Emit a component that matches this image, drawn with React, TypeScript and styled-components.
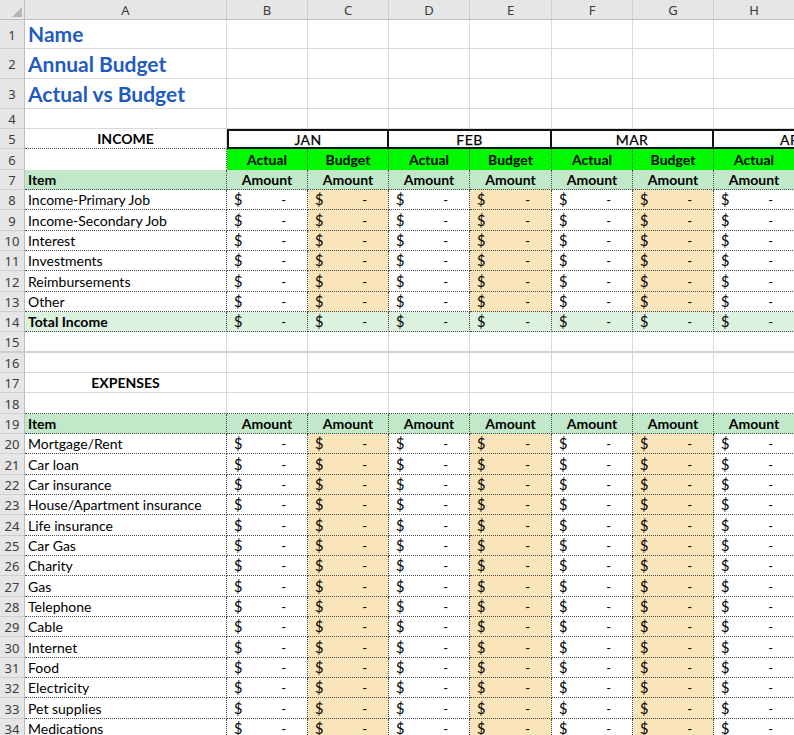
import React from 'react';
import styled, { createGlobalStyle } from 'styled-components';

const GlobalStyle = createGlobalStyle`
  html, body { margin: 0; padding: 0; background: #fff; }
  body { overflow: hidden; }
`;

const CELL_FONT = `"Lato", "Open Sans", "Noto Sans", sans-serif`;
const HEAD_FONT = `"Noto Sans", "Open Sans", sans-serif`;

type Line = 'grid' | 'dot' | 'none' | 'thick';

const line = (t: Line) => {
  switch (t) {
    case 'dot':
      return '1px dotted #4a4a4a';
    case 'none':
      return '1px solid transparent';
    case 'thick':
      return '2px solid #d2d2d2';
    default:
      return '1px solid #d9d9d9';
  }
};

const Sheet = styled.div`
  width: 794px;
  height: 735px;
  overflow: hidden;
  background: #fff;
  font-family: ${CELL_FONT};
  color: #000;
`;

const Row = styled.div<{ $h: number }>`
  display: flex;
  height: ${(p) => p.$h}px;
  width: max-content;
`;

const Corner = styled.div`
  width: 25px;
  height: 100%;
  box-sizing: border-box;
  background: #e6e6e6;
  border-right: 1px solid #bdbdbd;
  border-bottom: 1px solid #bdbdbd;
  display: flex;
  align-items: flex-end;
  justify-content: flex-end;
  padding: 0 2px 2px 0;
  flex: none;
`;

const ColHead = styled.div<{ $w: number }>`
  width: ${(p) => p.$w}px;
  height: 100%;
  box-sizing: border-box;
  flex: none;
  background: #e6e6e6;
  border-right: 1px solid #cfcfcf;
  border-bottom: 1px solid #bdbdbd;
  display: flex;
  align-items: center;
  justify-content: center;
  font-family: ${HEAD_FONT};
  font-size: 13px;
  color: #3c3c3c;
`;

const RowNum = styled.div<{ $bb?: Line }>`
  width: 25px;
  height: 100%;
  box-sizing: border-box;
  flex: none;
  background: #e6e6e6;
  border-right: 1px solid #bdbdbd;
  border-bottom: ${(p) => (p.$bb === 'thick' ? '2px solid #cfcfcf' : '1px solid #cfcfcf')};
  display: flex;
  align-items: center;
  justify-content: center;
  padding-top: 1px;
  font-family: ${HEAD_FONT};
  font-size: 13px;
  color: #3c3c3c;
`;

const Cell = styled.div<{
  $w: number;
  $bg?: string;
  $rb?: Line;
  $bb?: Line;
  $align?: 'left' | 'center';
  $bold?: boolean;
}>`
  width: ${(p) => p.$w}px;
  height: 100%;
  box-sizing: border-box;
  flex: none;
  background: ${(p) => p.$bg || '#fff'};
  border-right: ${(p) => line(p.$rb || 'grid')};
  border-bottom: ${(p) => line(p.$bb || 'grid')};
  display: flex;
  align-items: flex-end;
  justify-content: ${(p) => (p.$align === 'center' ? 'center' : 'flex-start')};
  padding: 0 3px 1px 3px;
  font-size: 14px;
  line-height: 16px;
  font-weight: ${(p) => (p.$bold ? 700 : 400)};
  white-space: nowrap;
  overflow: visible;
`;

const Title = styled.span`
  font-size: 21px;
  line-height: 26px;
  font-weight: 700;
  color: #1f5cbd;
`;

const MonthBox = styled.div<{ $w: number; $first?: boolean }>`
  width: ${(p) => p.$w}px;
  height: 100%;
  box-sizing: border-box;
  flex: none;
  border-top: 2px solid #111;
  border-bottom: 2px solid #111;
  border-right: 2px solid #111;
  border-left: ${(p) => (p.$first ? '2px solid #111' : 'none')};
  display: flex;
  align-items: center;
  justify-content: center;
  padding-top: 1px;
  font-size: 14px;
  line-height: 15px;
  letter-spacing: 0.4px;
  -webkit-text-stroke: 0.25px #000;
  background: #fff;
`;

const Money = styled.div<{ $w: number; $bg?: string; $rb?: Line; $bb?: Line }>`
  width: ${(p) => p.$w}px;
  height: 100%;
  box-sizing: border-box;
  flex: none;
  background: ${(p) => p.$bg || '#fff'};
  border-right: ${(p) => line(p.$rb || 'dot')};
  border-bottom: ${(p) => line(p.$bb || 'dot')};
  display: flex;
  align-items: flex-end;
  justify-content: space-between;
  padding: 0 21px 1px 7px;
  font-size: 14.5px;
  line-height: 16px;
`;

const Dash = styled.span`
  font-size: 13px;
`;

const COLS = [
  { l: 'A', w: 202 },
  { l: 'B', w: 81 },
  { l: 'C', w: 81 },
  { l: 'D', w: 81 },
  { l: 'E', w: 82 },
  { l: 'F', w: 81 },
  { l: 'G', w: 81 },
  { l: 'H', w: 81 },
];
const DATA = COLS.slice(1);

const GREEN = '#00f800';
const LIGHT = '#c1e9c9';
const PALE = '#dcf2df';
const PEACH = '#fae4b9';

const incomeItems = [
  'Income-Primary Job',
  'Income-Secondary Job',
  'Interest',
  'Investments',
  'Reimbursements',
  'Other',
];
const expenseItems = [
  'Mortgage/Rent',
  'Car loan',
  'Car insurance',
  'House/Apartment insurance',
  'Life insurance',
  'Car Gas',
  'Charity',
  'Gas',
  'Telephone',
  'Cable',
  'Internet',
  'Food',
  'Electricity',
  'Pet supplies',
  'Medications',
];

const rowH = (r: number) => {
  const top = (n: number) => Math.round(129 + (n - 5) * 20.33);
  return top(r + 1) - top(r);
};

const DataRow: React.FC<{ n: number; label: string; bold?: boolean; total?: boolean }> = ({
  n,
  label,
  bold,
  total,
}) => (
  <Row $h={rowH(n)}>
    <RowNum>{n}</RowNum>
    <Cell $w={COLS[0].w} $rb="dot" $bb="dot" $bold={bold} $bg={total ? PALE : '#fff'}>
      {label}
    </Cell>
    {DATA.map((c, i) => (
      <Money key={c.l} $w={c.w} $bg={total ? PALE : i % 2 === 1 ? PEACH : '#fff'}>
        <span>$</span>
        <Dash>-</Dash>
      </Money>
    ))}
  </Row>
);

const HeadRow: React.FC<{ n: number }> = ({ n }) => (
  <Row $h={rowH(n)}>
    <RowNum>{n}</RowNum>
    <Cell $w={COLS[0].w} $rb="dot" $bb="dot" $bold $bg={LIGHT}>
      Item
    </Cell>
    {DATA.map((c) => (
      <Cell key={c.l} $w={c.w} $rb="dot" $bb="dot" $bold $bg={LIGHT} $align="center">
        Amount
      </Cell>
    ))}
  </Row>
);

const EmptyRow: React.FC<{ n: number; bb?: Line; label?: string }> = ({ n, bb, label }) => (
  <Row $h={rowH(n)}>
    <RowNum $bb={bb}>{n}</RowNum>
    <Cell $w={COLS[0].w} $bb={bb} $bold $align="center">
      {label}
    </Cell>
    {DATA.map((c) => (
      <Cell key={c.l} $w={c.w} $bb={bb} />
    ))}
  </Row>
);

const CornerMark = () => (
  <svg width="10" height="10" viewBox="0 0 10 10">
    <polygon points="10,0 10,10 0,10" fill="#b5b5b5" />
  </svg>
);

export default function App() {
  const months = [
    { m: 'JAN', w: 162 },
    { m: 'FEB', w: 163 },
    { m: 'MAR', w: 162 },
    { m: 'APR', w: 162 },
  ];
  return (
    <>
      <GlobalStyle />
      <Sheet>
        <Row $h={20}>
          <Corner>
            <CornerMark />
          </Corner>
          {COLS.map((c) => (
            <ColHead key={c.l} $w={c.w}>
              {c.l}
            </ColHead>
          ))}
        </Row>
        {[
          { n: 1, t: 'Name', h: 29 },
          { n: 2, t: 'Annual Budget', h: 30 },
          { n: 3, t: 'Actual vs Budget', h: 30 },
          { n: 4, t: '', h: 20 },
        ].map((r) => (
          <Row key={r.n} $h={r.h}>
            <RowNum>{r.n}</RowNum>
            <Cell $w={COLS[0].w}>
              <Title>{r.t}</Title>
            </Cell>
            {DATA.map((c) => (
              <Cell key={c.l} $w={c.w} />
            ))}
          </Row>
        ))}

        <Row $h={rowH(5)}>
          <RowNum>5</RowNum>
          <Cell $w={COLS[0].w} $bb="dot" $bold $align="center">
            INCOME
          </Cell>
          {months.map((m, i) => (
            <MonthBox key={m.m} $w={m.w} $first={i === 0}>
              {m.m}
            </MonthBox>
          ))}
        </Row>

        <Row $h={rowH(6)}>
          <RowNum>6</RowNum>
          <Cell $w={COLS[0].w} $rb="dot" $bb="none" />
          {DATA.map((c, i) => (
            <Cell key={c.l} $w={c.w} $rb="dot" $bb="none" $bg={GREEN} $bold $align="center">
              {i % 2 === 0 ? 'Actual' : 'Budget'}
            </Cell>
          ))}
        </Row>

        <HeadRow n={7} />
        {incomeItems.map((it, i) => (
          <DataRow key={it} n={8 + i} label={it} />
        ))}
        <DataRow n={14} label="Total Income" bold total />
        <EmptyRow n={15} bb="thick" />
        <EmptyRow n={16} />
        <EmptyRow n={17} label="EXPENSES" />
        <EmptyRow n={18} bb="dot" />
        <HeadRow n={19} />
        {expenseItems.map((it, i) => (
          <DataRow key={it} n={20 + i} label={it} />
        ))}
      </Sheet>
    </>
  );
}
